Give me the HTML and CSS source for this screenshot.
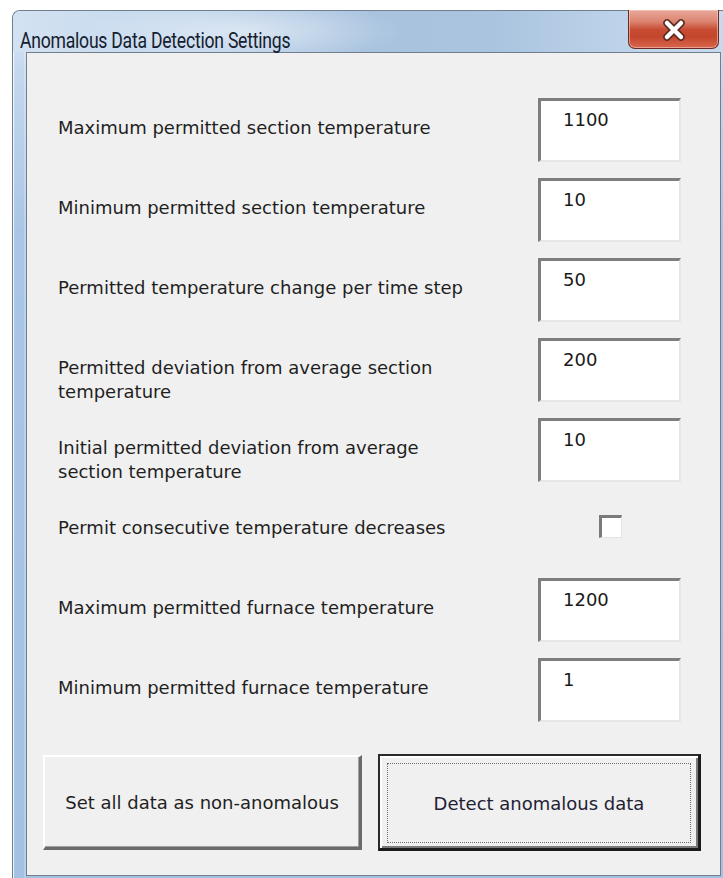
FILE: index.html
```html
<!DOCTYPE html>
<html lang="en">
<head>
<meta charset="utf-8">
<title>Anomalous Data Detection Settings</title>
<link rel="stylesheet" href="styles.css">
</head>
<body>
<div class="window">
  <div class="titlebar">
    <span class="title">Anomalous Data Detection Settings</span>
    <button class="close" aria-label="Close">
      <svg width="26" height="22" viewBox="0 0 26 22" aria-hidden="true">
        <path d="M6 4 L20 18 M20 4 L6 18" stroke="#5a2a22" stroke-width="7.5" stroke-linecap="round" fill="none"/>
        <path d="M6 4 L20 18 M20 4 L6 18" stroke="#ffffff" stroke-width="4.5" stroke-linecap="round" fill="none"/>
      </svg>
    </button>
  </div>
  <div class="client">
    <div class="fields">
      <label class="lbl" for="f1">Maximum permitted section temperature</label>
      <input class="txt" id="f1" type="text" value="1100">

      <label class="lbl" for="f2">Minimum permitted section temperature</label>
      <input class="txt" id="f2" type="text" value="10">

      <label class="lbl" for="f3">Permitted temperature change per time step</label>
      <input class="txt" id="f3" type="text" value="50">

      <label class="lbl" for="f4">Permitted deviation from average section temperature</label>
      <input class="txt" id="f4" type="text" value="200">

      <label class="lbl" for="f5">Initial permitted deviation from average section temperature</label>
      <input class="txt" id="f5" type="text" value="10">

      <label class="lbl" for="f6">Permit consecutive temperature decreases</label>
      <div class="chkcell"><input class="chk" id="f6" type="checkbox"></div>

      <label class="lbl" for="f7">Maximum permitted furnace temperature</label>
      <input class="txt" id="f7" type="text" value="1200">

      <label class="lbl" for="f8">Minimum permitted furnace temperature</label>
      <input class="txt" id="f8" type="text" value="1">
    </div>
    <div class="actions">
      <button class="btn">Set all data as non-anomalous</button>
      <button class="btn btn-default"><span class="focus">Detect anomalous data</span></button>
    </div>
  </div>
</div>
</body>
</html>
```

FILE: styles.css
```css
html, body {
  margin: 0;
  padding: 0;
  background: #ffffff;
  overflow: hidden;
}

body {
  width: 723px;
  height: 878px;
}

/* Aero-style window frame */
.window {
  box-sizing: border-box;
  width: 715px;
  margin: 10px 0 0 12px;
  padding: 0 6px 5px 13px;
  border: 1px solid #6f7f92;
  border-right: none;
  border-radius: 8px 0 0 0;
  background:
    linear-gradient(to right, rgba(255,255,255,0.35) 0, rgba(255,255,255,0) 2px, rgba(255,255,255,0) 11px, rgba(255,255,255,0.45) 12px, rgba(255,255,255,0) 13px),
    linear-gradient(to bottom, #dce8f5 0, #c4d8ee 60px, #aac6e6 220px, #a3c1e3 100%);
  box-shadow: inset 1px 1px 0 rgba(255,255,255,0.7);
}

.titlebar {
  display: flex;
  align-items: flex-start;
  height: 41px;
  margin-left: -13px;
  margin-right: -6px;
  padding-left: 7px;
  border-radius: 7px 0 0 0;
  background:
    radial-gradient(ellipse 160px 30px at 230px 20px, rgba(255,255,255,0.45), rgba(255,255,255,0)),
    linear-gradient(to right, #d3e2f2 0, #c2d6ec 180px, #a9c3df 360px, #aac4df 480px, #bfd4ea 620px, #c8daee 100%);
}

.title {
  margin-top: 17px;
  font-family: Roboto, "Noto Sans", sans-serif;
  font-size: 22px;
  line-height: 26px;
  letter-spacing: -0.3px;
  color: #15202e;
  transform: scaleX(0.8);
  transform-origin: left center;
  white-space: nowrap;
}

.close {
  margin: -1px 8px 0 auto;
  width: 91px;
  height: 39px;
  padding: 0;
  display: flex;
  align-items: center;
  justify-content: center;
  border: 1px solid #6b2b22;
  border-top: none;
  border-radius: 0 0 7px 7px;
  background: linear-gradient(to bottom, #e9a99b 0, #dc8572 30%, #c84b33 52%, #c3452c 70%, #d7674d 100%);
  box-shadow: inset 0 0 0 1px rgba(255,210,200,0.55);
}

.close svg {
  margin-top: 2px;
}

/* Form client area */
.client {
  box-sizing: border-box;
  height: 824px;
  border: 1px solid #717e8e;
  background: #f0f0f0;
  padding: 45px 39px 0 31px;
  font-family: "DejaVu Sans", Verdana, sans-serif;
  font-size: 18px;
  color: #1f1f1f;
}

.fields {
  display: grid;
  grid-template-columns: 1fr 143px;
  grid-auto-rows: 64px;
  row-gap: 16px;
  column-gap: 20px;
}

.lbl {
  padding-top: 18px;
  line-height: 24px;
  max-width: 420px;
}

.txt {
  box-sizing: border-box;
  width: 143px;
  height: 64px;
  margin: 0;
  padding: 8px 0 30px 22px;
  border-style: solid;
  border-width: 3px 2px 2px 3px;
  border-color: #7d7d7d #e6e6e6 #e6e6e6 #7d7d7d;
  background: #ffffff;
  font: inherit;
  font-size: 18px;
  line-height: 21px;
  color: #1a1a1a;
  outline: none;
}

.chkcell {
  display: flex;
  justify-content: center;
  padding-top: 17px;
}

.chk {
  appearance: none;
  -webkit-appearance: none;
  box-sizing: border-box;
  width: 23px;
  height: 23px;
  margin: 0 0 0 1px;
  border-style: solid;
  border-width: 3px 1px 1px 3px;
  border-color: #7a7a7a #e4e4e4 #e4e4e4 #7a7a7a;
  background: #ffffff;
}

.actions {
  display: grid;
  grid-template-columns: 319px 323px;
  column-gap: 16px;
  margin: 33px 0 0 -15px;
}

.btn {
  box-sizing: border-box;
  height: 95px;
  margin: 0;
  padding: 0;
  border-style: solid;
  border-width: 2px 3px 3px 2px;
  border-color: #ffffff #6a6a6a #6a6a6a #ffffff;
  background: #f0f0f0;
  box-shadow: inset -1px -1px 0 #a0a0a0;
  font: inherit;
  font-size: 18px;
  color: #1f1f1f;
}

.btn-default {
  height: 97px;
  margin-top: -1px;
  padding: 7px;
  border-width: 2px 3px 3px 2px;
  border-color: #2a2a2a #1c1c1c #1c1c1c #2a2a2a;
  box-shadow: inset 2px 2px 0 #ffffff, inset -2px -2px 0 #7a7a7a;
}

.focus {
  display: flex;
  align-items: center;
  justify-content: center;
  height: 100%;
  border: 1px dotted #6e6e6e;
  color: #1f2233;
}
```
